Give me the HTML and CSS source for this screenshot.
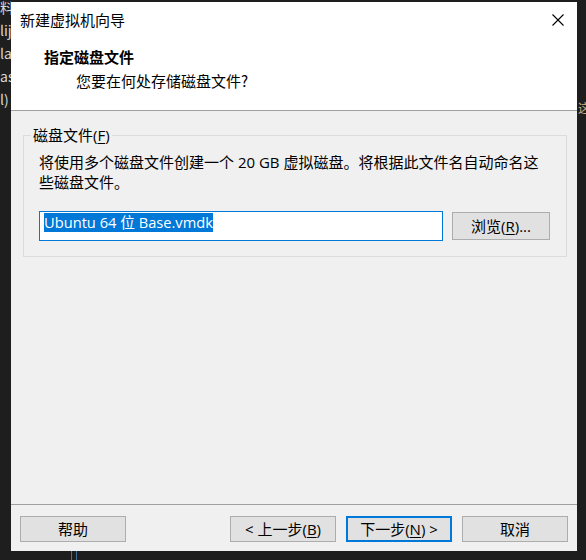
FILE: index.html
```
<!DOCTYPE html>
<html lang="zh-CN">
<head>
<meta charset="utf-8">
<title>新建虚拟机向导</title>
<link rel="stylesheet" href="styles.css">
</head>
<body>
<div class="screen">
  <div class="side-left">
    <div>料</div>
    <div>lij</div>
    <div>la</div>
    <div>as</div>
    <div>l)</div>
  </div>
  <div class="top-gap"></div>
  <div class="dialog">
    <div class="header">
      <div class="titlebar">
        <span class="title">新建虚拟机向导</span>
        <svg class="close" width="12" height="12" viewBox="0 0 12 12"><path d="M0.5 0.5 L11.5 11.5 M11.5 0.5 L0.5 11.5" stroke="#000" stroke-width="1.1" fill="none"/></svg>
      </div>
      <div class="heading">指定磁盘文件</div>
      <div class="subheading">您要在何处存储磁盘文件?</div>
    </div>
    <div class="main">
      <fieldset class="group">
        <legend class="legend">磁盘文件(<u>F</u>)</legend>
        <p class="desc">将使用多个磁盘文件创建一个 20 GB 虚拟磁盘。将根据此文件名自动命名这<br>些磁盘文件。</p>
        <div class="file-row">
          <div class="textbox"><span class="sel">Ubuntu 64 位 Base.vmdk</span></div>
          <div class="btn browse">浏览(<u>R</u>)...</div>
        </div>
      </fieldset>
    </div>
    <div class="footer">
      <div class="btn">帮助</div>
      <div class="spacer"></div>
      <div class="btn">&lt; 上一步(<u>B</u>)</div>
      <div class="btn primary">下一步(<u>N</u>) &gt;</div>
      <div class="btn">取消</div>
    </div>
  </div>
  <div class="side-right"><span class="tray">这</span></div>
  <div class="bottom-gap"><span class="vline"></span><span class="vline blue"></span></div>
</div>
</body>
</html>
```
FILE: styles.css
```
html, body {
  margin: 0;
  padding: 0;
}
body {
  background: #1e1e1e;
  width: 586px;
  height: 560px;
  overflow: hidden;
  font-family: "Open Sans", "Noto Sans CJK SC", sans-serif;
  font-size: 15px;
  color: #000;
}
.screen {
  display: grid;
  grid-template-columns: 11px 566px 9px;
  grid-template-rows: 2px 549px 9px;
  width: 586px;
  height: 560px;
}
.side-left {
  grid-column: 1;
  grid-row: 1 / 4;
  overflow: hidden;
  color: #d8d8d8;
  font-family: "Noto Sans CJK SC", sans-serif;
  font-size: 14px;
  line-height: 23px;
  margin-top: -4px;
  white-space: nowrap;
}
.top-gap {
  grid-column: 2;
  grid-row: 1;
}
.side-right {
  grid-column: 3;
  grid-row: 1 / 4;
  overflow: hidden;
  padding-top: 100px;
  box-sizing: border-box;
}
.tray {
  display: block;
  margin-left: 1px;
  color: #c8b48a;
  font-family: "Noto Sans CJK SC", sans-serif;
  font-size: 12px;
  line-height: 16px;
}
.bottom-gap {
  grid-column: 2;
  grid-row: 3;
  display: flex;
  padding-left: 60px;
  gap: 4px;
}
.vline {
  width: 1px;
  background: #6a6a6a;
}
.vline.blue {
  background: #3f6f8f;
}
.dialog {
  grid-column: 2;
  grid-row: 2;
  display: flex;
  flex-direction: column;
  background: #f0f0f0;
}
.header {
  background: #fff;
  height: 108px;
  border-bottom: 1px solid #a0a0a0;
  display: flex;
  flex-direction: column;
}
.titlebar {
  display: flex;
  justify-content: space-between;
  align-items: flex-start;
  height: 28px;
  padding: 8px 13px 0 9px;
  box-sizing: border-box;
}
.title {
  line-height: 20px;
  font-family: "Noto Sans CJK SC", sans-serif;
}
.close {
  margin-top: 4px;
  display: block;
}
.heading {
  margin: 17px 0 0 33px;
  font-weight: bold;
  line-height: 20px;
  font-family: "Noto Sans CJK SC", sans-serif;
}
.subheading {
  margin: 4px 0 0 65px;
  line-height: 20px;
  font-family: "Noto Sans CJK SC", sans-serif;
}
.main {
  flex: 1;
  padding: 14px 10px 0 12px;
}
.group {
  margin: 0;
  border: 1px solid #dcdcdc;
  padding: 7px 10px 15px 15px;
  min-width: 0;
}
.legend {
  margin-left: -8px;
  padding: 0 2px 0 2px;
  line-height: 20px;
}
.desc {
  margin: 0;
  line-height: 20px;
  white-space: nowrap;
}
.file-row {
  display: flex;
  align-items: center;
  gap: 9px;
  margin-top: 19px;
}
.textbox {
  width: 404px;
  height: 30px;
  box-sizing: border-box;
  border: 1px solid #0078d7;
  background: #fff;
  padding: 1px 3px 0 4px;
}
.sel {
  display: inline-block;
  background: #0078d7;
  color: #fff;
  line-height: 19px;
  height: 19px;
  font-size: 14.67px;
  vertical-align: top;
}
.btn {
  width: 106px;
  height: 26px;
  box-sizing: border-box;
  border: 1px solid #adadad;
  background: #e1e1e1;
  display: flex;
  align-items: center;
  justify-content: center;
  line-height: 20px;
  white-space: nowrap;
}
.btn.browse {
  width: 98px;
  height: 28px;
}
.btn.primary {
  border: 2px solid #0078d7;
}
u {
  text-decoration: underline;
  text-underline-offset: 2px;
}
.footer {
  border-top: 1px solid #a0a0a0;
  height: 47px;
  box-sizing: border-box;
  display: flex;
  align-items: flex-start;
  gap: 10px;
  padding: 11px 9px 0 9px;
}
.spacer {
  flex: 1;
}
```
